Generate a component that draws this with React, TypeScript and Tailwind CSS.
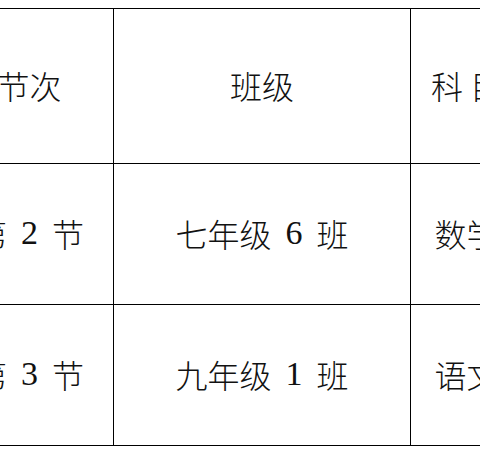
import React from 'react'

type Cell = { pre?: string; num?: string; post?: string }

const rows: Cell[][] = [
  [{ pre: '节次' }, { pre: '班级' }, { pre: '科 目' }],
  [{ pre: '第', num: '2', post: '节' }, { pre: '七年级', num: '6', post: '班' }, { pre: '数学' }],
  [{ pre: '第', num: '3', post: '节' }, { pre: '九年级', num: '1', post: '班' }, { pre: '语文' }],
]

export default function App() {
  return (
    <div className="h-[452px] w-[480px] overflow-hidden bg-white">
      <div
        className="ml-[-55px] mt-2 grid w-[584px] grid-cols-[168px_297px_112px] border-l border-t border-black text-[32px] font-extralight leading-none text-[#111]"
        style={{ fontFamily: '"Noto Sans CJK SC", sans-serif' }}
      >
        {rows.map((row, i) =>
          row.map((cell, j) => (
            <div
              key={`${i}-${j}`}
              className={`flex items-center justify-center whitespace-pre border-b border-r border-black pb-[2px] ${
                i === 0 ? 'h-[155px]' : 'h-[141px]'
              }`}
            >
              <span>{cell.pre}</span>
              {cell.num && (
                <span
                  className="px-[14px] text-[34px] font-normal"
                  style={{ fontFamily: '"Liberation Serif", "DejaVu Serif", serif' }}
                >
                  {cell.num}
                </span>
              )}
              {cell.post && <span>{cell.post}</span>}
            </div>
          ))
        )}
      </div>
    </div>
  )
}
